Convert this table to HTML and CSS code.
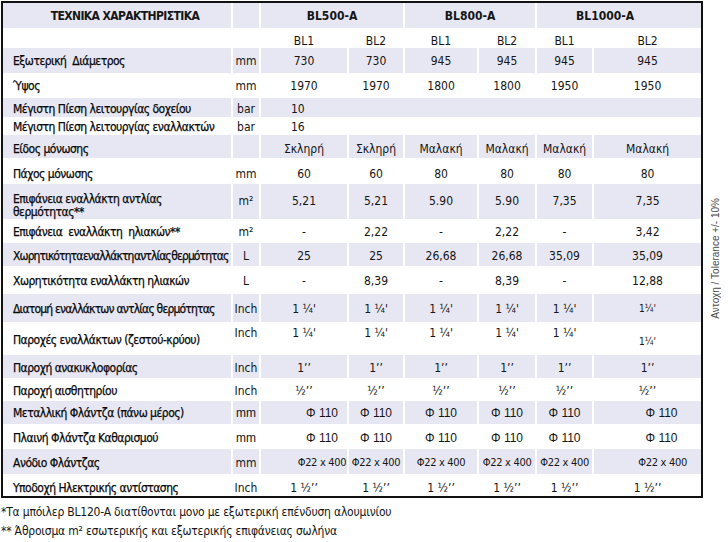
FILE: index.html
```html
<!DOCTYPE html>
<html lang="el">
<head>
<meta charset="utf-8">
<title>Τεχνικά χαρακτηριστικά</title>
<link rel="stylesheet" href="styles.css">
</head>
<body>
<div class="page">
  <div class="sheet">
    <div class="frame">
      <table class="spec">
        <colgroup>
          <col class="c-label"><col class="c-unit"><col class="c-1"><col class="c-2"><col class="c-3"><col class="c-4"><col class="c-5"><col class="c-6">
        </colgroup>
        <tr class="alt h25 head">
          <th class="title">ΤΕΧΝΙΚΑ ΧΑΡΑΚΤΗΡΙΣΤΙΚΑ</th><th></th>
          <th colspan="2">BL500-A</th><th colspan="2">BL800-A</th><th colspan="2" class="m-last">BL1000-A</th>
        </tr>
        <tr class="h19 sub">
          <td></td><td></td><td>BL1</td><td>BL2</td><td>BL1</td><td>BL2</td><td>BL1</td><td>BL2</td>
        </tr>
        <tr class="alt h25 up">
          <td class="lbl">Εξωτερική&nbsp; Διάμετρος</td><td>mm</td><td>730</td><td>730</td><td>945</td><td>945</td><td>945</td><td>945</td>
        </tr>
        <tr class="h25 up">
          <td class="lbl">Ύψος</td><td>mm</td><td>1970</td><td>1970</td><td>1800</td><td>1800</td><td>1950</td><td>1950</td>
        </tr>
        <tr class="alt h19">
          <td class="lbl">Μέγιστη Πίεση λειτουργίας δοχείου</td><td>bar</td><td colspan="6" class="span">10</td>
        </tr>
        <tr class="h18">
          <td class="lbl">Μέγιστη Πίεση λειτουργίας εναλλακτών</td><td>bar</td><td colspan="6" class="span">16</td>
        </tr>
        <tr class="alt h23 down">
          <td class="lbl">Είδος μόνωσης</td><td></td><td>Σκληρή</td><td>Σκληρή</td><td>Μαλακή</td><td>Μαλακή</td><td>Μαλακή</td><td>Μαλακή</td>
        </tr>
        <tr class="h26 down">
          <td class="lbl">Πάχος μόνωσης</td><td>mm</td><td>60</td><td>60</td><td>80</td><td>80</td><td>80</td><td>80</td>
        </tr>
        <tr class="alt h35 two">
          <td class="lbl">Επιφάνεια εναλλάκτη αντλίας θερμότητας**</td><td>m²</td><td>5,21</td><td>5,21</td><td>5.90</td><td>5.90</td><td>7,35</td><td>7,35</td>
        </tr>
        <tr class="h24">
          <td class="lbl">Επιφάνεια&nbsp; εναλλάκτη&nbsp; ηλιακών**</td><td>m²</td><td>-</td><td>2,22</td><td>-</td><td>2,22</td><td>-</td><td>3,42</td>
        </tr>
        <tr class="alt h23">
          <td class="lbl tight">Χωρητικότητα εναλλάκτη αντλίας θερμότητας</td><td>L</td><td>25</td><td>25</td><td>26,68</td><td>26,68</td><td>35,09</td><td>35,09</td>
        </tr>
        <tr class="h28">
          <td class="lbl">Χωρητικότητα εναλλάκτη ηλιακών</td><td>L</td><td>-</td><td>8,39</td><td>-</td><td>8,39</td><td>-</td><td>12,88</td>
        </tr>
        <tr class="alt h28">
          <td class="lbl narrow">Διατομή εναλλάκτων αντλίας θερμότητας</td><td>Inch</td><td>1 ¼'</td><td>1 ¼'</td><td>1 ¼'</td><td>1 ¼'</td><td>1 ¼'</td><td class="small">1¼'</td>
        </tr>
        <tr class="h33 hi">
          <td class="lbl">Παροχές εναλλάκτων (ζεστού-κρύου)</td><td>Inch</td><td>1 ¼'</td><td>1 ¼'</td><td>1 ¼'</td><td>1 ¼'</td><td>1 ¼'</td><td class="small low">1¼'</td>
        </tr>
        <tr class="alt h23">
          <td class="lbl">Παροχή ανακυκλοφορίας</td><td>Inch</td><td>1’’</td><td>1’’</td><td>1’’</td><td>1’’</td><td>1’’</td><td>1’’</td>
        </tr>
        <tr class="h23">
          <td class="lbl">Παροχή αισθητηρίου</td><td>Inch</td><td>½’’</td><td>½’’</td><td>½’’</td><td>½’’</td><td>½’’</td><td>½’’</td>
        </tr>
        <tr class="alt h23 phi up">
          <td class="lbl">Μεταλλική Φλάντζα (πάνω μέρος)</td><td>mm</td><td class="p1">Φ 110</td><td>Φ 110</td><td>Φ 110</td><td>Φ 110</td><td>Φ 110</td><td class="p6">Φ 110</td>
        </tr>
        <tr class="h25 phi">
          <td class="lbl">Πλαινή Φλάντζα Καθαρισμού</td><td>mm</td><td class="p1">Φ 110</td><td>Φ 110</td><td>Φ 110</td><td>Φ 110</td><td>Φ 110</td><td class="p6">Φ 110</td>
        </tr>
        <tr class="alt h25 anode">
          <td class="lbl">Ανόδιο Φλάντζας</td><td>mm</td><td class="p1">Φ22 x 400</td><td>Φ22 x 400</td><td>Φ22 x 400</td><td>Φ22 x 400</td><td>Φ22 x 400</td><td class="p6b">Φ22 x 400</td>
        </tr>
        <tr class="h22 drop">
          <td class="lbl">Υποδοχή Ηλεκτρικής αντίστασης</td><td>Inch</td><td>1 ½’’</td><td>1 ½’’</td><td>1 ½’’</td><td>1 ½’’</td><td>1 ½’’</td><td>1 ½’’</td>
        </tr>
      </table>
    </div>
    <div class="side"><span class="note">Αντοχη / Tolerance +/- 10%</span></div>
  </div>
  <div class="notes">
    <p>*Τα μπόιλερ BL120-A διατίθονται μονο με εξωτερική επένδυση αλουμινίου</p>
    <p>** Άθροισμα m² εσωτερικής και εξωτερικής επιφάνειας σωλήνα</p>
  </div>
</div>
</body>
</html>
```

FILE: styles.css
```css
html, body {
  margin: 0;
  background: #ffffff;
}

body {
  padding: 1px;
  font-family: "DejaVu Sans Condensed", "DejaVu Sans", sans-serif;
  font-size: 12px;
  color: #161616;
}

.sheet {
  display: flex;
  align-items: flex-start;
}

.frame {
  border: 2px solid #111111;
  width: 698px;
}

.spec {
  border-collapse: separate;
  border-spacing: 0;
  table-layout: fixed;
  width: 698px;
}

.c-label { width: 228px; }
.c-unit { width: 28px; }
.c-1 { width: 88px; }
.c-2 { width: 56px; }
.c-3 { width: 74px; }
.c-4 { width: 58px; }
.c-5 { width: 57px; }
.c-6 { width: 109px; }

.spec th,
.spec td {
  box-sizing: border-box;
  padding: 2px 0 0 0;
  border-left: 2px solid #ffffff;
  text-align: center;
  vertical-align: middle;
  font-weight: normal;
  white-space: nowrap;
  line-height: 14px;
}

.spec th:first-child,
.spec td:first-child {
  border-left: 0;
}

.spec tr.alt th,
.spec tr.alt td {
  background: #e6e7f3;
}

.head th {
  font-weight: bold;
  padding-top: 0;
}

.spec .head .title {
  letter-spacing: -0.6px;
  padding-left: 16px;
}

.head .m-last {
  padding-right: 28px;
}

.sub td {
  padding-top: 6px;
}

.up td {
  padding-top: 0;
}

.down td {
  padding-top: 5px;
}

.drop td {
  padding-top: 5px;
}

.spec .lbl {
  text-align: left;
  padding-left: 10px;
  letter-spacing: -0.5px;
  color: #0a0a0a;
  -webkit-text-stroke: 0.25px #0a0a0a;
}

.spec .tight {
  letter-spacing: -0.9px;
  word-spacing: -2px;
}

.spec .narrow {
  letter-spacing: -0.8px;
}

.spec .span {
  text-align: left;
  padding-left: 30px;
}

.spec .two .lbl {
  white-space: normal;
  line-height: 13px;
  padding-top: 8px;
}

.two td:not(.lbl) {
  vertical-align: top;
  padding-top: 10px;
}

.hi td:not(.lbl):not(.low) {
  vertical-align: top;
  padding-top: 4px;
}

.small {
  font-size: 10px;
}

.spec .low {
  padding-top: 6px;
}

.spec .p1 { padding-left: 36px; }
.spec .p6 { padding-left: 28px; }
.spec .p6b { padding-left: 30px; }

.phi td:not(.lbl) {
  font-family: "Liberation Sans", Arial, sans-serif;
}

.anode td:not(.lbl):not(:nth-child(2)) {
  font-size: 11px;
  letter-spacing: -0.3px;
}

.h18 { height: 18px; }
.h19 { height: 19px; }
.h22 { height: 22px; }
.h23 { height: 23px; }
.h24 { height: 24px; }
.h25 { height: 25px; }
.h26 { height: 26px; }
.h28 { height: 28px; }
.h33 { height: 33px; }
.h35 { height: 35px; }

.side {
  width: 25px;
  padding-top: 197px;
  display: flex;
  justify-content: center;
}

.note {
  writing-mode: vertical-rl;
  transform: rotate(180deg);
  font-family: "Liberation Sans", Arial, sans-serif;
  font-size: 10px;
  color: #4a4a4a;
  white-space: nowrap;
}

.notes {
  margin-top: 5px;
  line-height: 19px;
  letter-spacing: -0.2px;
}

.notes p {
  margin: 0;
}
```
